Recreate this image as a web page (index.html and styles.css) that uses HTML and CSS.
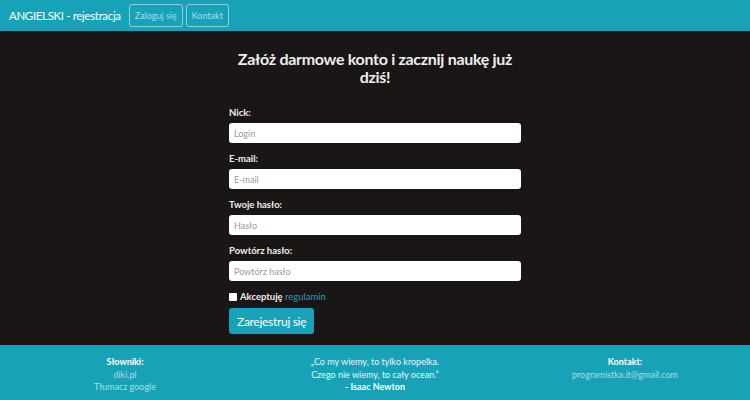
FILE: index.html
```html
<!DOCTYPE html>
<html lang="pl">
<head>
<meta charset="utf-8">
<title>ANGIELSKI - rejestracja</title>
<link rel="stylesheet" href="styles.css">
</head>
<body>
<nav class="navbar">
  <span class="brand">ANGIELSKI - rejestracja</span>
  <a class="nav-btn" href="#">Zaloguj się</a>
  <a class="nav-btn" href="#">Kontakt</a>
</nav>
<main class="main">
  <div class="panel">
    <h1 class="title">Załóż darmowe konto i zacznij naukę już dziś!</h1>
    <form class="form">
      <div class="group">
        <label class="label">Nick:</label>
        <input class="input" type="text" placeholder="Login">
      </div>
      <div class="group">
        <label class="label">E-mail:</label>
        <input class="input" type="text" placeholder="E-mail">
      </div>
      <div class="group">
        <label class="label">Twoje hasło:</label>
        <input class="input" type="password" placeholder="Hasło">
      </div>
      <div class="group">
        <label class="label">Powtórz hasło:</label>
        <input class="input" type="password" placeholder="Powtórz hasło">
      </div>
      <label class="check"><span class="box"></span>Akceptuję&nbsp;<a href="#" class="link">regulamin</a></label>
      <button class="submit" type="button">Zarejestruj się</button>
    </form>
  </div>
</main>
<footer class="footer">
  <div class="col">
    <div class="head">Słowniki:</div>
    <a class="flink" href="#">diki.pl</a>
    <a class="flink" href="#">Tłumacz google</a>
  </div>
  <div class="col quote">
    <div>„Co my wiemy, to tylko kropelka.</div>
    <div>Czego nie wiemy, to cały ocean.”</div>
    <div class="head">- Isaac Newton</div>
  </div>
  <div class="col">
    <div class="head">Kontakt:</div>
    <a class="flink" href="#">programistka.it@gmail.com</a>
  </div>
</footer>
</body>
</html>
```

FILE: styles.css
```css
* { box-sizing: border-box; }
html, body { margin: 0; padding: 0; }
body {
  font-family: Lato, "Noto Sans", sans-serif;
  background: #1a1616;
  width: 750px;
  height: 400px;
  overflow: hidden;
  display: flex;
  flex-direction: column;
}
.navbar {
  height: 31px;
  background: #17a2b8;
  display: flex;
  align-items: center;
  padding: 0 9px;
  flex-shrink: 0;
}
.brand {
  color: #fff;
  font-size: 11.5px;
  letter-spacing: -0.35px;
  margin-right: 8px;
}
.nav-btn {
  color: #a9dfe8;
  text-decoration: none;
  font-size: 9px;
  height: 23px;
  padding: 0 5px;
  border: 1px solid rgba(255,255,255,0.5);
  border-radius: 3px;
  display: flex;
  align-items: center;
  margin-right: 3px;
}
.main {
  flex: 1;
  display: flex;
  justify-content: center;
}
.panel {
  width: 292px;
  padding-top: 19px;
}
.title {
  color: #eee;
  font-size: 16px;
  letter-spacing: -0.3px;
  font-weight: 700;
  text-align: center;
  line-height: 18px;
  margin: 0 0 21px;
}
.form { display: flex; flex-direction: column; }
.group { display: flex; flex-direction: column; margin-bottom: 10px; }
.label {
  color: #eee;
  font-size: 9.5px;
  font-weight: 700;
  line-height: 12px;
  margin-bottom: 4px;
}
.input {
  height: 20px;
  border: none;
  border-radius: 3px;
  background: #fff;
  padding: 0 5px;
  font-family: inherit;
  font-size: 9px;
}
.input::placeholder { color: #9a9a9a; }
.check {
  display: flex;
  align-items: center;
  color: #eee;
  font-size: 9.5px;
  font-weight: 700;
  margin-top: 0;
  margin-bottom: 5px;
  line-height: 12px;
}
.box {
  width: 8px; height: 8px;
  background: #fff;
  border-radius: 1px;
  margin-right: 3px;
}
.link { color: #17a2b8; text-decoration: none; font-weight: 400; }
.submit {
  align-self: flex-start;
  background: #17a2b8;
  color: #fff;
  border: none;
  border-radius: 3px;
  height: 26px;
  padding: 0 8px;
  font-family: inherit;
  font-size: 12px;
  letter-spacing: -0.3px;
}
.footer {
  height: 55px;
  background: #17a2b8;
  display: grid;
  grid-template-columns: 1fr 1fr 1fr;
  padding-top: 11px;
  flex-shrink: 0;
}
.col {
  display: flex;
  flex-direction: column;
  align-items: center;
  font-size: 9px;
  line-height: 12.5px;
  color: #e8f6f8;
}
.head { color: #fff; font-weight: 700; }
.flink { color: #a9dfe8; text-decoration: none; }
```
